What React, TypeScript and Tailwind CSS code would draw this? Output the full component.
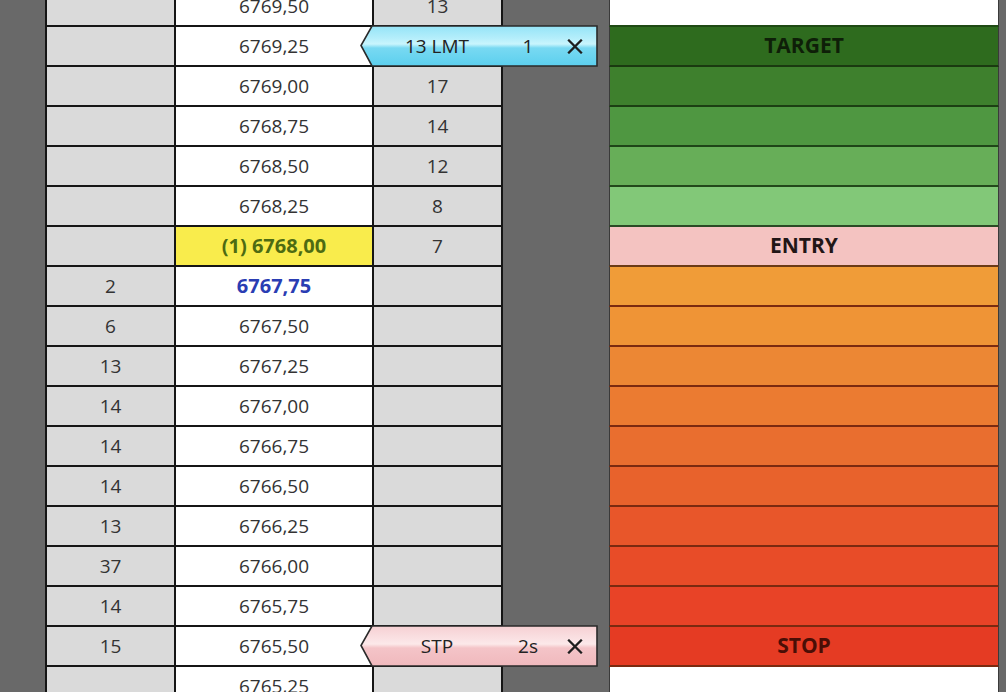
import React from "react";

type Row = {
  c1?: string;
  price: string;
  priceKind?: "normal" | "entry" | "last";
  c3?: string;
  c3Bg?: string;
  panel: string;
  panelLabel?: string;
  panelText?: string;
  panelBorder?: string;
  tag?: "lmt" | "stp";
};

const ORANGES = [
  "#f09c38",
  "#ef9436",
  "#ec8734",
  "#eb7b31",
  "#e96e2f",
  "#e8622c",
  "#e8562a",
  "#e84c28",
  "#e84327",
];

const rows: Row[] = [
  { price: "6769,50", c3: "13", panel: "#ffffff", panelBorder: "#1f4a14" },
  { price: "6769,25", tag: "lmt", panel: "#2e6b1e", panelLabel: "TARGET", panelText: "#0e1f08", panelBorder: "#1a3a10" },
  { price: "6769,00", c3: "17", panel: "#3e802d", panelBorder: "#1c3f13" },
  { price: "6768,75", c3: "14", panel: "#4f9741", panelBorder: "#1f4518" },
  { price: "6768,50", c3: "12", panel: "#67ae58", panelBorder: "#23481b" },
  { price: "6768,25", c3: "8", panel: "#82c878", panelBorder: "#2b4a25" },
  { price: "(1) 6768,00", priceKind: "entry", c3: "7", panel: "#f4c3c1", panelLabel: "ENTRY", panelText: "#221616", panelBorder: "#6b3a16" },
  ...ORANGES.map((col, i) => ({
    c1: ["2", "6", "13", "14", "14", "14", "13", "37", "14"][i],
    price: ["6767,75", "6767,50", "6767,25", "6767,00", "6766,75", "6766,50", "6766,25", "6766,00", "6765,75"][i],
    priceKind: (i === 0 ? "last" : "normal") as "last" | "normal",
    panel: col,
    panelBorder: "#7a2a10",
  })),
  { c1: "15", price: "6765,50", tag: "stp", panel: "#e53b23", panelLabel: "STOP", panelText: "#4a0e06", panelBorder: "#7a2a10" },
  { price: "6765,25", panel: "#ffffff", panelBorder: "#cccccc" },
];

function Cross() {
  return (
    <svg width="16" height="15" viewBox="0 0 16 15">
      <path d="M2 1.5 L14 13.5 M14 1.5 L2 13.5" stroke="#1e1e1e" strokeWidth="2.3" strokeLinecap="square" />
    </svg>
  );
}

function Tag({ kind }: { kind: "lmt" | "stp" }) {
  const isL = kind === "lmt";
  const gid = isL ? "glmt" : "gstp";
  return (
    <div className="absolute left-[360px] top-[-2px] z-10 h-[42px] w-[238px]">
      <svg className="absolute inset-0" width="238" height="42" viewBox="0 0 238 42">
        <defs>
          <linearGradient id={gid} x1="0" y1="0" x2="0" y2="1">
            {isL ? (
              <>
                <stop offset="0" stopColor="#95e4f7" />
                <stop offset="0.3" stopColor="#b4eefb" />
                <stop offset="0.45" stopColor="#c9f5fd" />
                <stop offset="0.55" stopColor="#78d9f2" />
                <stop offset="1" stopColor="#5ccfee" />
              </>
            ) : (
              <>
                <stop offset="0" stopColor="#f6d0d3" />
                <stop offset="0.3" stopColor="#fae0e2" />
                <stop offset="0.45" stopColor="#fce9ea" />
                <stop offset="0.55" stopColor="#f4c4c8" />
                <stop offset="1" stopColor="#f0b9bd" />
              </>
            )}
          </linearGradient>
        </defs>
        <path d="M12 1 H237 V41 H12 L1 20.5 Z" fill={`url(#${gid})`} stroke="#2a2a2a" strokeWidth="1.6" />
      </svg>
      <div className="absolute left-[12px] top-0 flex h-[42px] w-[130px] items-center justify-center text-[19px] text-[#222]">
        {isL ? "13 LMT" : "STP"}
      </div>
      <div className="absolute left-[150px] top-0 flex h-[42px] w-[36px] items-center justify-center text-[19px] text-[#222]">
        {isL ? "1" : "2s"}
      </div>
      <div className="absolute left-[207px] top-0 flex h-[42px] items-center">
        <Cross />
      </div>
    </div>
  );
}

export default function App() {
  return (
    <div
      className="h-[692px] w-[1006px] overflow-hidden bg-[#696969]"
      style={{ fontFamily: '"Open Sans", "Noto Sans", sans-serif' }}
    >
      <div className="mt-[-13px] flex flex-col">
        {rows.map((r, i) => (
          <div key={i} className="relative flex h-[40px]">
            <div className="w-[45px] shrink-0" />
            <div className="flex h-[40px] w-[131px] shrink-0 items-center justify-center border-x-2 border-b-2 border-[#151515] bg-[#dadada] text-[19px] text-[#333]">
              {r.c1}
            </div>
            <div
              className={
                "flex h-[40px] w-[198px] shrink-0 items-center justify-center border-r-2 border-b-2 border-[#151515] " +
                (r.priceKind === "entry"
                  ? "bg-[#f9ec4c] text-[20px] font-bold text-[#4d6b12]"
                  : r.priceKind === "last"
                  ? "bg-white text-[20px] font-bold text-[#2a3db3]"
                  : "bg-white text-[19px] text-[#333]")
              }
            >
              {r.price}
            </div>
            <div className="flex h-[40px] w-[129px] shrink-0 items-center justify-center border-r-2 border-b-2 border-[#151515] bg-[#dadada] text-[19px] text-[#333]">
              {r.c3}
            </div>
            <div className="w-[106px] shrink-0" />
            <div
              className="flex h-[40px] w-[390px] shrink-0 items-center justify-center border-x border-b-2 border-x-[#3a3a3a] text-[21px] font-bold"
              style={{ backgroundColor: r.panel, borderBottomColor: r.panelBorder, color: r.panelText }}
            >
              {r.panelLabel}
            </div>
            {r.tag && <Tag kind={r.tag} />}
          </div>
        ))}
      </div>
    </div>
  );
}
